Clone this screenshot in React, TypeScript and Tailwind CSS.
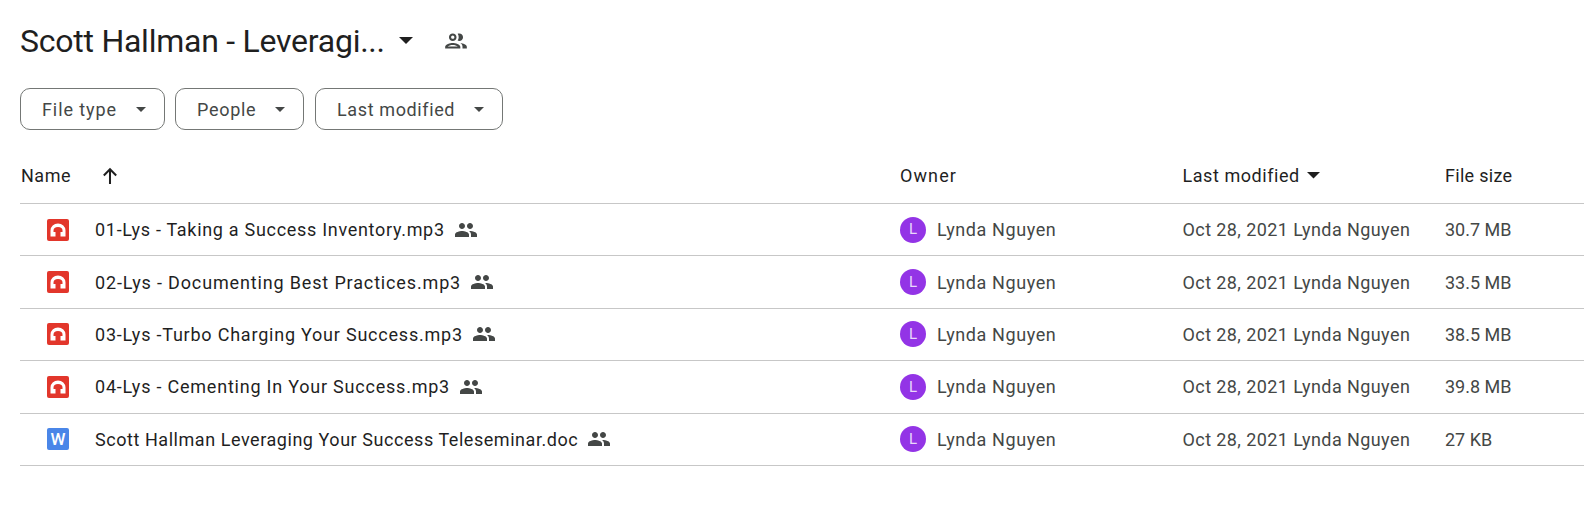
const GROUP_OUTLINE = "M9 13.75c-2.34 0-7 1.17-7 3.5V19h14v-1.75c0-2.33-4.66-3.5-7-3.5zM4.34 17c.84-.58 2.87-1.25 4.66-1.25s3.82.67 4.66 1.25H4.34zM9 12c1.93 0 3.5-1.57 3.5-3.5S10.93 5 9 5 5.5 6.57 5.5 8.5 7.07 12 9 12zm0-5c.83 0 1.5.67 1.5 1.5S9.83 10 9 10s-1.5-.67-1.5-1.5S8.17 7 9 7zm7.04 6.81c1.16.84 1.96 1.96 1.96 3.44V19h4v-1.75c0-2.02-3.5-3.17-5.96-3.44zM15 12c1.93 0 3.5-1.57 3.5-3.5S16.93 5 15 5c-.54 0-1.04.13-1.5.35.63.89 1 1.98 1 3.15s-.37 2.26-1 3.15c.46.22.96.35 1.5.35z";
const GROUP_FILLED = "M16 11c1.66 0 2.99-1.34 2.99-3S17.66 5 16 5c-1.66 0-3 1.34-3 3s1.34 3 3 3zm-8 0c1.66 0 2.99-1.34 2.99-3S9.66 5 8 5C6.34 5 5 6.34 5 8s1.34 3 3 3zm0 2c-2.33 0-7 1.17-7 3.5V19h14v-2.5c0-2.33-4.67-3.5-7-3.5zm8 0c-.29 0-.62.02-.97.05 1.16.84 1.97 1.97 1.97 3.45V19h6v-2.5c0-2.33-4.67-3.5-7-3.5z";

function Caret({ className }: { className: string }) {
  return (
    <svg viewBox="0 0 14 7" className={className} fill="currentColor">
      <path d="M0 0h14L7 7z" />
    </svg>
  );
}

function AudioIcon() {
  return (
    <svg viewBox="0 0 22 22" className="w-[22px] h-[22px]">
      <rect width="22" height="22" rx="2" fill="#e2362b" />
      <path d="M3.5 17.5V11.5a7.5 7 0 0 1 15 0v6h-5V13h2v-1.5a4.5 3.5 0 0 0-9 0V13h2v4.5z" fill="#fff" />
    </svg>
  );
}

function WordIcon() {
  return (
    <div className="w-[22px] h-[22px] rounded-[2px] bg-[#4a86e8] flex items-center justify-center text-white text-[17px] font-medium leading-none">
      W
    </div>
  );
}

function Chip({ label, className }: { label: string; className: string }) {
  return (
    <button className={`${className} h-[42px] rounded-[10px] border border-[#747775] flex items-center justify-between pl-[21px] pr-[18px] text-[18px] text-[#444746]`}>
      <span>{label}</span>
      <Caret className="w-[10px] h-[5px]" />
    </button>
  );
}

const rows = [
  { name: "01-Lys - Taking a Success Inventory.mp3", size: "30.7 MB", kind: "audio", tracking: "tracking-[0.7px]" },
  { name: "02-Lys - Documenting Best Practices.mp3", size: "33.5 MB", kind: "audio", tracking: "tracking-[0.85px]" },
  { name: "03-Lys -Turbo Charging Your Success.mp3", size: "38.5 MB", kind: "audio", tracking: "tracking-[0.78px]" },
  { name: "04-Lys - Cementing In Your Success.mp3", size: "39.8 MB", kind: "audio", tracking: "tracking-[0.78px]" },
  { name: "Scott Hallman Leveraging Your Success Teleseminar.doc", size: "27 KB", kind: "word", tracking: "tracking-[0.55px]" },
];

export default function App() {
  return (
    <div className="w-[1584px] h-[522px] overflow-hidden bg-white pl-[20px] font-['Roboto',sans-serif]">
      <div className="h-[88px] flex items-center pb-[7px]">
        <span className="text-[32px] leading-none text-[#1f1f1f] tracking-[-0.25px]">Scott Hallman - Leveragi...</span>
        <Caret className="w-[14px] h-[7px] ml-[14px] text-[#1f1f1f]" />
        <svg viewBox="0 0 24 24" className="w-[26px] h-[26px] ml-[30px] text-[#444746]" fill="currentColor">
          <path d={GROUP_OUTLINE} />
        </svg>
      </div>
      <div className="flex">
        <Chip label="File type" className="w-[145px] tracking-[0.9px]" />
        <Chip label="People" className="w-[129px] ml-[10px] tracking-[0.7px]" />
        <Chip label="Last modified" className="w-[188px] ml-[11px] tracking-[0.62px]" />
      </div>
      <div className="h-[74px] flex items-center border-b border-[#c7c7c7] text-[18px] text-[#1f1f1f] pt-[18px]">
        <div className="w-[880px] flex items-center pl-[1px] tracking-[0.5px]">
          <span>Name</span>
          <svg viewBox="0 0 16 16" className="w-[18px] h-[18px] ml-[30px]" fill="none" stroke="currentColor" strokeWidth="1.8">
            <path d="M8 15V2M2.5 7.5 8 2l5.5 5.5" />
          </svg>
        </div>
        <div className="w-[282.5px] tracking-[1.1px]">Owner</div>
        <div className="w-[262.5px] flex items-center tracking-[0.55px]">
          <span>Last modified</span>
          <Caret className="w-[13px] h-[6.5px] ml-[7px]" />
        </div>
        <div className="tracking-[0.3px]">File size</div>
      </div>
      {rows.map((r) => (
        <div key={r.name} className="h-[52.4px] flex items-center border-b border-[#c7c7c7] text-[18px]">
          <div className="w-[880px] flex items-center pl-[27px]">
            {r.kind === "audio" ? <AudioIcon /> : <WordIcon />}
            <span className={`ml-[26px] text-[#1f1f1f] ${r.tracking}`}>{r.name}</span>
            <svg viewBox="0 0 24 24" className="w-[24px] h-[24px] ml-[9px] text-[#444746]" fill="currentColor">
              <path d={GROUP_FILLED} />
            </svg>
          </div>
          <div className="w-[282.5px] flex items-center text-[#444746]">
            <div className="w-[26px] h-[26px] rounded-full bg-[#9334e6] text-[#e9d7fb] text-[15px] flex items-center justify-center">L</div>
            <span className="ml-[11px] tracking-[0.6px]">Lynda Nguyen</span>
          </div>
          <div className="w-[262.5px] text-[#444746] tracking-[0.41px]">Oct 28, 2021 Lynda Nguyen</div>
          <div className="text-[#444746]">{r.size}</div>
        </div>
      ))}
    </div>
  );
}
